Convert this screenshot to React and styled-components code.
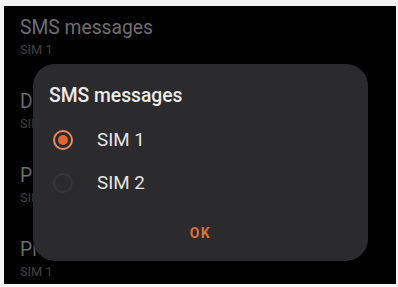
import React from "react";
import styled, { createGlobalStyle } from "styled-components";

const Global = createGlobalStyle`
  html, body { margin: 0; padding: 0; background: #f3f3f3; }
  body { font-family: Roboto, "Noto Sans", Arial, sans-serif; }
`;

const Frame = styled.div`
  padding: 6px 2px 3px 4px;
  width: 398px;
  height: 287px;
  box-sizing: border-box;
`;

const Screen = styled.div`
  position: relative;
  width: 392px;
  height: 278px;
  background: #000;
  overflow: hidden;
`;

const List = styled.div`
  display: flex;
  flex-direction: column;
`;

const Item = styled.div`
  padding: 11px 16px 23px;
  display: flex;
  flex-direction: column;
  white-space: nowrap;
`;

const ItemTitle = styled.div`
  font-size: 19.3px;
  line-height: 22px;
  color: #6e6e6e;
`;

const ItemSub = styled.div`
  margin-top: 4px;
  font-size: 12.8px;
  line-height: 14px;
  color: #424242;
`;

const Dialog = styled.div`
  position: absolute;
  left: 29px;
  top: 58px;
  width: 335px;
  height: 197px;
  box-sizing: border-box;
  padding: 20px 16px 20px;
  background: #2b2b2d;
  border-radius: 22px;
  display: flex;
  flex-direction: column;
  box-shadow: 0 0 6px rgba(0, 0, 0, 0.5);
`;

const DialogTitle = styled.div`
  font-size: 19.3px;
  line-height: 24px;
  font-weight: 500;
  color: #ececec;
`;

const Options = styled.div`
  margin-top: 10px;
  display: flex;
  flex-direction: column;
`;

const Option = styled.div`
  height: 43px;
  display: flex;
  align-items: center;
  gap: 24px;
  padding-left: 4px;
`;

const Radio = styled.span`
  width: 20px;
  height: 20px;
  box-sizing: border-box;
  border-radius: 50%;
  border: 2px solid ${(p) => (p.$checked ? "#ea8a5e" : "#363638")};
  display: flex;
  align-items: center;
  justify-content: center;
  &::after {
    content: "";
    width: 10px;
    height: 10px;
    border-radius: 50%;
    background: ${(p) => (p.$checked ? "#e0652f" : "transparent")};
  }
`;

const OptionLabel = styled.span`
  font-size: 18.8px;
  line-height: 22px;
  color: #e4e4e4;
`;

const OkButton = styled.div`
  margin-top: 21px;
  align-self: center;
  font-size: 14px;
  line-height: 16px;
  font-weight: 700;
  letter-spacing: 1.5px;
  color: #e06d38;
`;

const items = [
  { title: "SMS messages", sub: "SIM 1" },
  { title: "Data", sub: "SIM 1" },
  { title: "Primary SIM", sub: "SIM 1" },
  { title: "Preferred SIM", sub: "SIM 1" },
];

export default function App() {
  return (
    <>
      <Global />
      <Frame>
        <Screen>
          <List>
            {items.map((it, i) => (
              <Item key={i}>
                <ItemTitle>{it.title}</ItemTitle>
                <ItemSub>{it.sub}</ItemSub>
              </Item>
            ))}
          </List>
          <Dialog>
            <DialogTitle>SMS messages</DialogTitle>
            <Options>
              <Option>
                <Radio $checked />
                <OptionLabel>SIM 1</OptionLabel>
              </Option>
              <Option>
                <Radio />
                <OptionLabel>SIM 2</OptionLabel>
              </Option>
            </Options>
            <OkButton>OK</OkButton>
          </Dialog>
        </Screen>
      </Frame>
    </>
  );
}
